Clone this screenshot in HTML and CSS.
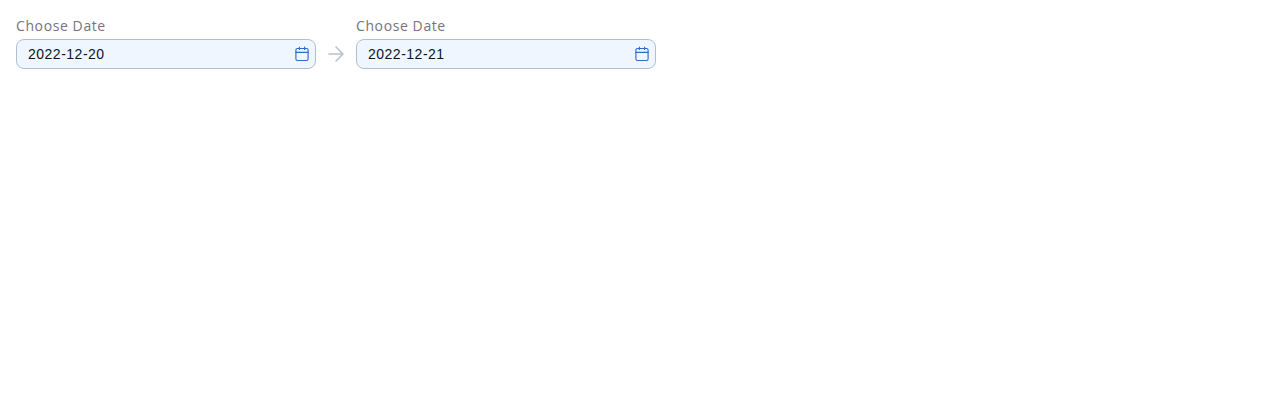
FILE: index.html
```html
<!DOCTYPE html>
<html lang="en">
<head>
<meta charset="utf-8">
<title>Date range</title>
<link rel="stylesheet" href="styles.css">
</head>
<body>
<div class="range">
  <div class="field">
    <label class="label" for="start">Choose Date</label>
    <div class="control">
      <input class="input" id="start" type="text" value="2022-12-20">
      <svg class="calendar" viewBox="0 0 16 16"><rect x="1.9" y="2.5" width="12.2" height="12" rx="1.5"/><path d="M5.4 1v2.5M10.6 1v2.5M2 6.4h12"/></svg>
    </div>
  </div>
  <svg class="arrow" viewBox="0 0 24 24"><path d="M5 12h14M12 5l7 7-7 7"/></svg>
  <div class="field">
    <label class="label" for="end">Choose Date</label>
    <div class="control">
      <input class="input" id="end" type="text" value="2022-12-21">
      <svg class="calendar" viewBox="0 0 16 16"><rect x="1.9" y="2.5" width="12.2" height="12" rx="1.5"/><path d="M5.4 1v2.5M10.6 1v2.5M2 6.4h12"/></svg>
    </div>
  </div>
</div>
</body>
</html>
```
FILE: styles.css
```css
* { box-sizing: border-box; }
body { margin: 0; padding: 16px; background: #fff; }
.range { display: flex; align-items: flex-end; gap: 8px; }
.field { width: 300px; }
.label {
  display: block;
  height: 23px;
  font: 14px/20px "Open Sans", sans-serif;
  letter-spacing: 0.6px;
  color: #737381;
}
.control {
  display: flex;
  align-items: center;
  height: 30px;
  padding: 0 5px 0 11px;
  border: 1px solid #b0bfd0;
  border-radius: 8px;
  background: #eff6ff;
}
.input {
  flex: 1;
  min-width: 0;
  padding: 0;
  border: 0;
  outline: 0;
  background: transparent;
  font: 14px/20px "Liberation Sans", Arial, sans-serif;
  letter-spacing: 0.5px;
  color: #051525;
}
.calendar, .arrow { fill: none; stroke-linecap: round; stroke-linejoin: round; }
.calendar { width: 16px; height: 16px; stroke: #2d6cca; stroke-width: 1.15; }
.arrow { width: 24px; height: 24px; margin-bottom: 3px; stroke: #b8c2cc; stroke-width: 1.6; }
```
